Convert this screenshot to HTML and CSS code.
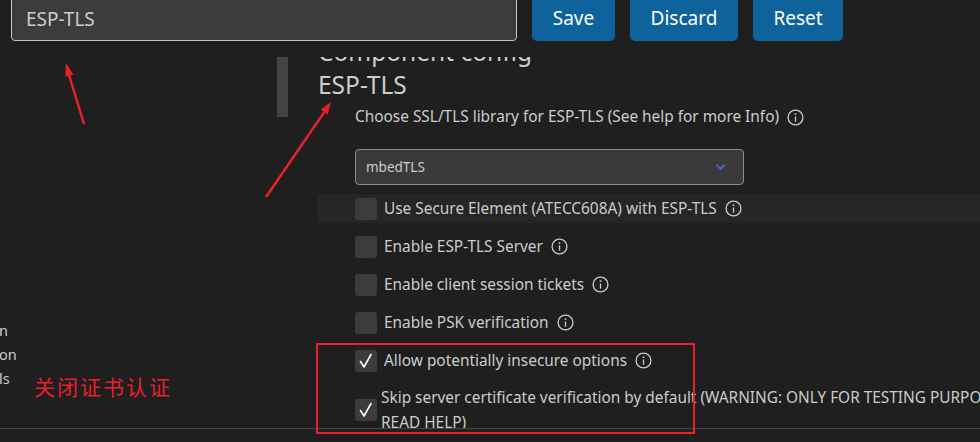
FILE: index.html
```html
<!DOCTYPE html>
<html lang="en">
<head>
<meta charset="utf-8">
<title>ESP-TLS config</title>
<link rel="stylesheet" href="styles.css">
</head>
<body>
<div class="page">
  <header class="topbar">
    <div class="search">ESP-TLS</div>
    <div class="actions">
      <button class="btn btn-save">Save</button>
      <button class="btn btn-discard">Discard</button>
      <button class="btn btn-reset">Reset</button>
    </div>
  </header>
  <div class="content">
    <nav class="sidebar">
      <div class="side-item">n</div>
      <div class="side-item">on</div>
      <div class="side-item">ls</div>
    </nav>
    <div class="scroll-mark"></div>
    <main class="main">
      <h2 class="heading">Component config</h2>
      <h3 class="heading">ESP-TLS</h3>
      <div class="field-label">Choose SSL/TLS library for ESP-TLS (See help for more Info)
        <svg class="info" viewBox="0 0 16 16"><circle cx="8" cy="8" r="7" /><circle class="dot" cx="8" cy="4.8" r="0.9"/><path d="M8 7v5"/></svg>
      </div>
      <div class="select">
        <span>mbedTLS</span>
        <svg class="chev" viewBox="0 0 12 8"><path d="M1.5 1.5 6 6 10.5 1.5"/></svg>
      </div>
      <div class="row highlight">
        <span class="box"></span>
        <span class="label">Use Secure Element (ATECC608A) with ESP-TLS</span>
        <svg class="info" viewBox="0 0 16 16"><circle cx="8" cy="8" r="7" /><circle class="dot" cx="8" cy="4.8" r="0.9"/><path d="M8 7v5"/></svg>
      </div>
      <div class="row">
        <span class="box"></span>
        <span class="label">Enable ESP-TLS Server</span>
        <svg class="info" viewBox="0 0 16 16"><circle cx="8" cy="8" r="7" /><circle class="dot" cx="8" cy="4.8" r="0.9"/><path d="M8 7v5"/></svg>
      </div>
      <div class="row">
        <span class="box"></span>
        <span class="label">Enable client session tickets</span>
        <svg class="info" viewBox="0 0 16 16"><circle cx="8" cy="8" r="7" /><circle class="dot" cx="8" cy="4.8" r="0.9"/><path d="M8 7v5"/></svg>
      </div>
      <div class="row">
        <span class="box"></span>
        <span class="label">Enable PSK verification</span>
        <svg class="info" viewBox="0 0 16 16"><circle cx="8" cy="8" r="7" /><circle class="dot" cx="8" cy="4.8" r="0.9"/><path d="M8 7v5"/></svg>
      </div>
      <div class="row">
        <span class="box checked"><svg viewBox="0 0 22 22"><path d="M5.5 11.5 9 17 16 4.5"/></svg></span>
        <span class="label">Allow potentially insecure options</span>
        <svg class="info" viewBox="0 0 16 16"><circle cx="8" cy="8" r="7" /><circle class="dot" cx="8" cy="4.8" r="0.9"/><path d="M8 7v5"/></svg>
      </div>
      <div class="row tall">
        <span class="box checked"><svg viewBox="0 0 22 22"><path d="M5.5 11.5 9 17 16 4.5"/></svg></span>
        <span class="label wide">Skip server certificate verification by default (WARNING: ONLY FOR TESTING PURPOSES, READ HELP)</span>
      </div>
    </main>
  </div>
  <div class="bottom"></div>

  <svg class="annot" viewBox="0 0 980 442">
    <path class="annot-line" d="M84 124 L69 75"/>
    <polygon class="annot-head" points="66,63 73.4,74.6 65.4,76.8"/>
    <path class="annot-line" d="M266 197 L325 111"/>
    <polygon class="annot-head" points="331,102 327.6,114.4 320.8,109.4"/>
    <rect class="annot-box" x="317" y="344" width="377" height="89"/>
  </svg>
  <div class="annot-text">关闭证书认证</div>
</div>
</body>
</html>
```

FILE: styles.css
```css
* { box-sizing: border-box; }

html, body {
  margin: 0;
  padding: 0;
  background: #1f1f1f;
}

body {
  width: 980px;
  height: 442px;
  overflow: hidden;
  font-family: "Noto Sans", "Open Sans", sans-serif;
  color: #cccccc;
}

.page {
  position: relative;
  width: 980px;
  height: 442px;
  display: flex;
  flex-direction: column;
}

.topbar {
  position: relative;
  z-index: 2;
  height: 57px;
  background: #1f1f1f;
  display: flex;
  align-items: flex-end;
  gap: 15px;
  padding: 0 0 16px 11px;
  flex-shrink: 0;
}

.search {
  width: 506px;
  height: 50px;
  background: #3c3c3c;
  border: 1px solid #c4c4c4;
  border-radius: 4px;
  display: flex;
  align-items: flex-end;
  padding: 0 0 8px 14px;
  font-size: 19px;
  color: #cccccc;
}

.actions {
  display: flex;
  gap: 15px;
  height: 50px;
}

.btn {
  height: 50px;
  background: #0e639c;
  border: none;
  border-radius: 5px;
  color: #ffffff;
  font-family: "Noto Sans", "Open Sans", sans-serif;
  font-size: 19px;
  padding: 4px 0 0 0;
}

.btn-save { width: 83px; }
.btn-discard { width: 108px; }
.btn-reset { width: 90px; }

.content {
  height: 371px;
  display: flex;
  overflow: hidden;
  flex-shrink: 0;
}

.sidebar {
  width: 277px;
  flex-shrink: 0;
  padding-top: 261px;
  font-size: 14.5px;
}

.side-item {
  height: 24px;
  line-height: 24px;
  margin-left: -1px;
}

.scroll-mark {
  width: 11px;
  height: 60px;
  background: #434343;
  flex-shrink: 0;
}

.main {
  margin-left: 29px;
  margin-top: -22.5px;
  flex: 1;
  min-width: 0;
}

.heading {
  margin: 0 0 0 1px;
  font-weight: 400;
  font-size: 24.5px;
  line-height: 33px;
  color: #cccccc;
  white-space: nowrap;
}

.field-label {
  margin: 5.5px 0 0 38px;
  height: 22px;
  line-height: 22px;
  font-size: 15.4px;
  display: flex;
  align-items: center;
  white-space: nowrap;
}

.info {
  width: 17px;
  height: 17px;
  margin-left: 8px;
  flex-shrink: 0;
  fill: none;
  stroke: #cccccc;
  stroke-width: 1.2;
}

.info .dot {
  fill: #cccccc;
  stroke: none;
}

.select {
  margin: 21px 0 0 38px;
  width: 389px;
  height: 36px;
  border: 1px solid #8c8c8c;
  border-radius: 4px;
  background: #3a3a3a;
  display: flex;
  align-items: center;
  justify-content: space-between;
  padding: 0 17px 0 10px;
  font-size: 13.5px;
}

.chev {
  width: 11px;
  height: 8px;
  fill: none;
  stroke: #4a6ad8;
  stroke-width: 2;
}

.row {
  margin-top: 9px;
  min-height: 29px;
  display: flex;
  align-items: center;
  padding-left: 38px;
  font-size: 15.4px;
  white-space: nowrap;
}

.highlight {
  background: #262626;
}

.box {
  width: 22px;
  height: 22px;
  border-radius: 3px;
  background: #3c3c3c;
  flex-shrink: 0;
  margin-right: 7px;
  display: flex;
}

.box svg {
  width: 22px;
  height: 22px;
  fill: none;
  stroke: #ffffff;
  stroke-width: 1.6;
  stroke-linecap: round;
  stroke-linejoin: round;
}

.tall {
  padding-top: 1px;
}

.tall .box { margin-right: 4px; }

.label.wide {
  width: 665px;
  flex-shrink: 0;
  white-space: normal;
  line-height: 25px;
}

.bottom {
  flex: 1;
  border-top: 1px solid #454545;
}

.annot {
  position: absolute;
  z-index: 3;
  left: 0;
  top: 0;
  width: 980px;
  height: 442px;
  pointer-events: none;
}

.annot-line {
  stroke: #e8202a;
  stroke-width: 2.5;
  fill: none;
}

.annot-head {
  fill: #e8202a;
}

.annot-box {
  fill: none;
  stroke: #e8202a;
  stroke-width: 2;
}

.annot-text {
  position: absolute;
  z-index: 3;
  left: 34px;
  top: 371px;
  font-family: "Noto Sans CJK SC", sans-serif;
  font-size: 21px;
  line-height: 30px;
  color: #e8202a;
  letter-spacing: 2px;
}
```
